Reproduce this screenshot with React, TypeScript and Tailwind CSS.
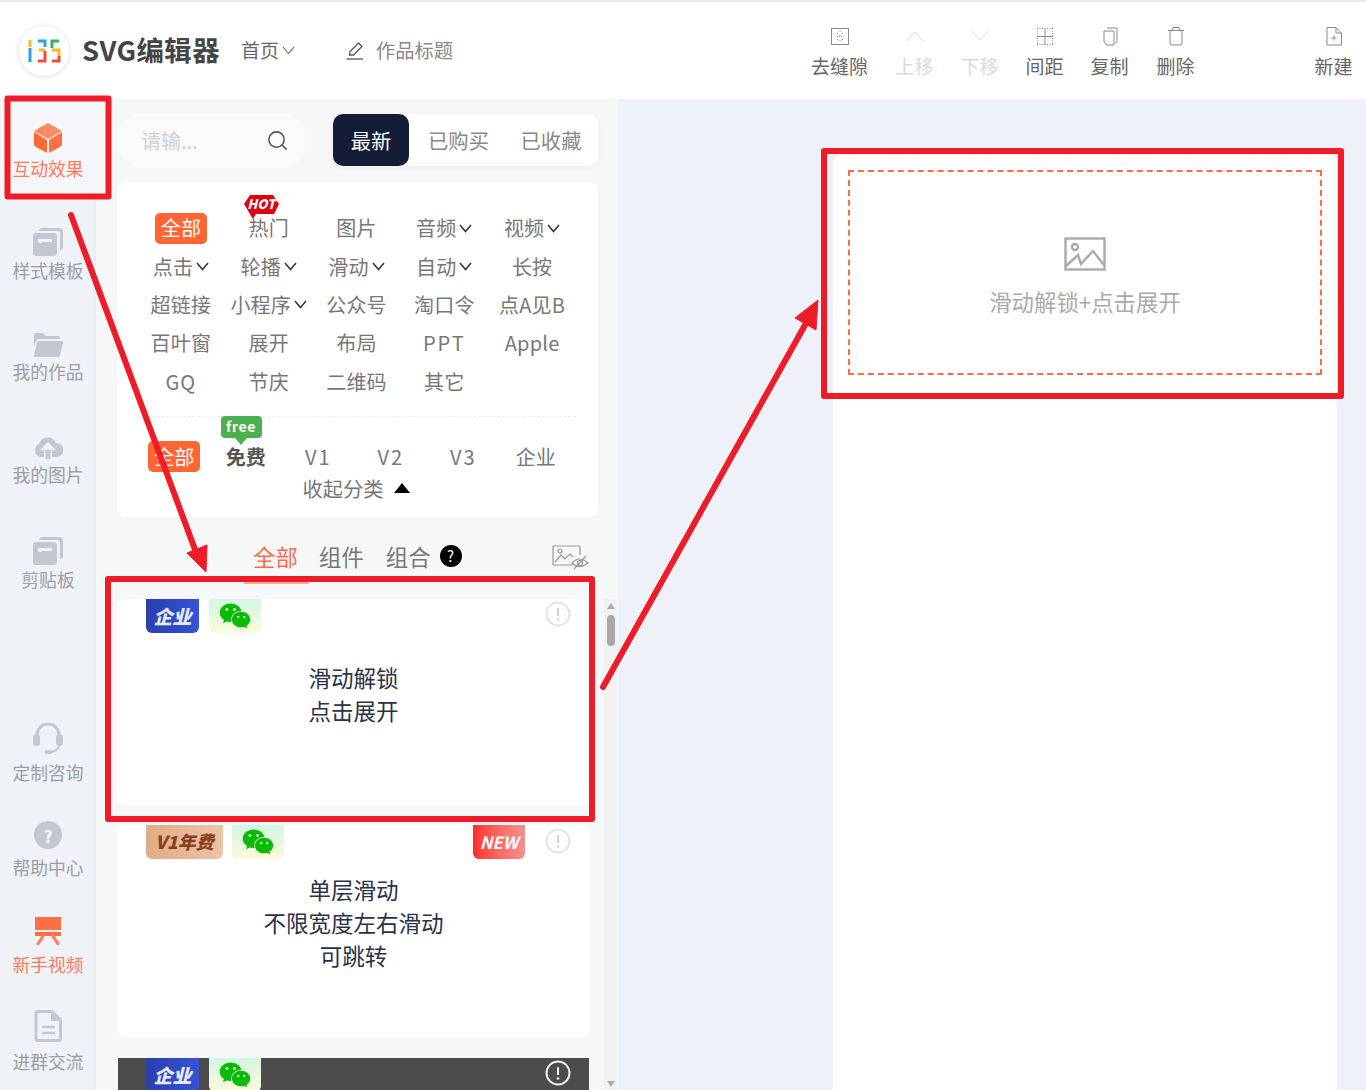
import { Search } from "lucide-react";
import { ReactNode } from "react";
import { FaWeixin } from "react-icons/fa";

const FONT = "font-['Noto_Sans_CJK_SC','Noto_Sans',sans-serif]";

const Chevron = ({ color = "#333", width = 1.5 }: { color?: string; width?: number }) => (
    <svg width="13" height="9" viewBox="0 0 13 9" fill="none" className="ml-[3px] shrink-0">
        <path d="M1 1 L6.5 7.5 L12 1" stroke={color} strokeWidth={width} />
    </svg>
);

const PenIcon = () => (
    <svg width="20" height="20" viewBox="0 0 20 20" fill="none" stroke="#555" strokeWidth="1.3">
        <path d="M4.5 14 L5 10.5 L13.5 2 L17 5.5 L8.5 14 Z" />
        <path d="M1.5 18 H18" />
    </svg>
);

const CubeIcon = () => (
    <svg width="30" height="32" viewBox="0 0 30 32">
        <path d="M15 1 L29 9 L15 17 L1 9 Z" fill="#ff8a65" />
        <path d="M1 10 L14 18 L14 31 L3 25 Q1 24 1 22 Z" fill="#ff6a33" />
        <path d="M29 10 L16 18 L16 31 L27 25 Q29 24 29 22 Z" fill="#ff7043" />
    </svg>
);

const TemplateIcon = () => (
    <svg width="30" height="28" viewBox="0 0 30 28">
        <path d="M6 3 Q6 0 9 0 L26 0 Q30 0 30 4 L30 19 Q30 22 27 22 L27 5 Q27 3 25 3 Z" fill="#c3c7d1" />
        <rect x="0" y="5" width="24" height="23" rx="3" fill="#c3c7d1" />
        <path d="M5 11 H19 V14 L9 14 A2 2 0 1 1 5 12 Z" fill="#f0f3f7" />
    </svg>
);

const FolderIcon = () => (
    <svg width="30" height="24" viewBox="0 0 30 24">
        <path d="M1 2 Q1 0 3 0 L10 0 L13 3 L25 3 Q27 3 27 5 L27 6 L6 6 Q4 6 3 8 L1 14 Z" fill="#c3c7d1" />
        <path d="M6 8 L29 8 Q30 8 30 10 L27 22 Q27 24 25 24 L2 24 Q1 24 1 22 L4 10 Q4 8 6 8 Z" fill="#c3c7d1" />
    </svg>
);

const CloudIcon = () => (
    <svg width="30" height="24" viewBox="0 0 30 24">
        <path d="M7 22 A7 7 0 0 1 6 9 A9 9 0 0 1 23 8 A7 7 0 0 1 24 22 L19 22 L19 15 L23 15 L15 7 L7 15 L11 15 L11 22 Z" fill="#c3c7d1" />
        <rect x="12.5" y="15" width="5" height="9" fill="#c3c7d1" />
    </svg>
);

const HeadsetIcon = () => (
    <svg width="30" height="32" viewBox="0 0 30 32">
        <path d="M4 15 V13 A11 11 0 0 1 26 13 V15" fill="none" stroke="#c3c7d1" strokeWidth="3" />
        <rect x="0" y="12" width="7" height="12" rx="3.5" fill="#c3c7d1" />
        <rect x="23" y="12" width="7" height="12" rx="3.5" fill="#c3c7d1" />
        <path d="M26 24 Q25 29 17 30" fill="none" stroke="#c3c7d1" strokeWidth="2" />
        <ellipse cx="15.5" cy="30" rx="4" ry="2" fill="#c3c7d1" />
    </svg>
);

const HelpIcon = () => (
    <div className="w-7 h-7 rounded-full bg-[#c3c7d1] flex items-center justify-center text-white font-bold text-[17px] leading-none">?</div>
);

const VideoIcon = () => (
    <svg width="26" height="28" viewBox="0 0 26 28">
        <rect x="0" y="0" width="26" height="13" fill="#ff6f47" />
        <rect x="0" y="15" width="26" height="4" fill="#ff6f47" />
        <path d="M8 19 L3 27 M18 19 L23 27" stroke="#ff7b57" strokeWidth="3" strokeLinecap="round" />
    </svg>
);

const DocIcon = () => (
    <svg width="28" height="32" viewBox="0 0 28 32">
        <path d="M2 3 Q2 1.5 4 1.5 L18 1.5 L26.5 10 L26.5 29 Q26.5 30.5 25 30.5 L4 30.5 Q2 30.5 2 29 Z" fill="none" stroke="#c3c7d1" strokeWidth="3" />
        <path d="M17 2 V11 H26 Z" fill="#c3c7d1" />
        <path d="M8 17 H21 M8 23 H21" stroke="#c3c7d1" strokeWidth="2.5" />
    </svg>
);

const LogoMark = () => (
    <svg width="34" height="26" viewBox="0 0 34 26" fill="none" strokeWidth="3">
        <path d="M3 2 V9" stroke="#f5b81f" />
        <path d="M3 10 V24" stroke="#2f9fe8" />
        <path d="M11 3 H18 V9" stroke="#2f9fe8" />
        <path d="M12 12 H18" stroke="#f5b81f" />
        <path d="M18 13 V23 H11" stroke="#ef4b3a" />
        <path d="M32 3 H25 V10" stroke="#35b558" />
        <path d="M25 12 H32 V18" stroke="#f5b81f" />
        <path d="M32 18 V23 H25" stroke="#ef4b3a" />
    </svg>
);

const ImageEyeIcon = () => (
    <svg width="37" height="26" viewBox="0 0 37 26" fill="none" stroke="#999" strokeWidth="1.2">
        <path d="M21 20 H2 Q1 20 1 19 V2 Q1 1 2 1 H27 Q28 1 28 2 V10" />
        <circle cx="8" cy="6" r="2" />
        <path d="M3 17 L9 10 L13 14 L18 9 L21 12" />
        <path d="M20 18 Q27 10 36 18 Q27 25 20 18 Z" />
        <circle cx="28" cy="18" r="2.5" />
        <path d="M34 11 L22 24" />
    </svg>
);

const ToolIcon = ({ type, color }: { type: string; color: string }) => (
    <svg width="22" height="22" viewBox="0 0 22 22" fill="none" stroke={color} strokeWidth="1">
        {type === "gap" && (
            <>
                <rect x="2.5" y="3.5" width="17" height="16" />
                <path d="M8 8.5 H9 M13 8.5 H14 M11 6 V7 M8 11.5 H14 M11 10 V11 M8 14.5 H9 M13 14.5 H14 M11 15 V17" strokeDasharray="1 1" />
            </>
        )}
        {type === "up" && <path d="M3 16 L11 7 L19 16" />}
        {type === "down" && <path d="M3 6 L11 15 L19 6" />}
        {type === "space" && (
            <>
                <path d="M3 3.5 H19 M3 19.5 H19 M3.5 3 V20 M18.5 3 V20" strokeDasharray="1 1.5" />
                <path d="M3 11.5 H19 M11 4 V20" />
            </>
        )}
        {type === "copy" && (
            <>
                <path d="M8 3 H18 V17 Q18 18 16 18" />
                <path d="M5 6 H15 V20 H8 L5 17 Z" />
            </>
        )}
        {type === "trash" && <path d="M3 5.5 H19 M5 6 V18 Q5 20 7 20 H15 Q17 20 17 18 V6 M7 5 L8 2.5 H14 L15 5" />}
        {type === "new" && <path d="M4 2.5 H13 L18.5 8 V20 H4 Z M13 2.5 V8 H18.5 M8.5 13 H13.5 M11 10.5 V15.5" />}
    </svg>
);

const tools = [
    { label: "去缝隙", type: "gap", off: false, cls: "" },
    { label: "上移", type: "up", off: true, cls: "ml-[10px]" },
    { label: "下移", type: "down", off: true, cls: "" },
    { label: "间距", type: "space", off: false, cls: "" },
    { label: "复制", type: "copy", off: false, cls: "" },
    { label: "删除", type: "trash", off: false, cls: "ml-[1px]" },
    { label: "新建", type: "new", off: false, cls: "ml-[93px]" },
];

const sideItems = [
    { label: "样式模板", icon: <TemplateIcon />, cls: "mt-[27px]", gap: "mt-[0px]", active: false },
    { label: "我的作品", icon: <FolderIcon />, cls: "mt-[47px]", gap: "mt-[-2px]", active: false },
    { label: "我的图片", icon: <CloudIcon />, cls: "mt-[48px]", gap: "mt-[-1px]", active: false },
    { label: "剪贴板", icon: <TemplateIcon />, cls: "mt-[49px]", gap: "mt-[0px]", active: false },
    { label: "定制咨询", icon: <HeadsetIcon />, cls: "mt-[131px]", gap: "mt-[6px]", active: false },
    { label: "帮助中心", icon: <HelpIcon />, cls: "mt-[35px]", gap: "mt-[4px]", active: false },
    { label: "新手视频", icon: <VideoIcon />, cls: "mt-[36px]", gap: "mt-[5px]", active: true },
    { label: "进群交流", icon: <DocIcon />, cls: "mt-[34px]", gap: "mt-[7px]", active: false },
];

const categories: [string, boolean][] = [
    ["全部", false], ["热门", false], ["图片", false], ["音频", true], ["视频", true],
    ["点击", true], ["轮播", true], ["滑动", true], ["自动", true], ["长按", false],
    ["超链接", false], ["小程序", true], ["公众号", false], ["淘口令", false], ["点A见B", false],
    ["百叶窗", false], ["展开", false], ["布局", false], ["PPT", false], ["Apple", false],
    ["GQ", false], ["节庆", false], ["二维码", false], ["其它", false],
];

const levels = ["全部", "免费", "V1", "V2", "V3", "企业"];

const SideItem = ({ label, icon, cls, gap, active }: { label: string; icon: ReactNode; cls: string; gap: string; active: boolean }) => (
    <div className={`flex flex-col items-center ${cls}`}>
        <div className="h-[32px] flex items-center justify-center">{icon}</div>
        <div className={`text-[17.8px] leading-[24px] whitespace-nowrap ${gap} ${active ? "text-[#ff7a5c]" : "text-[#9a9ea6]"}`}>{label}</div>
    </div>
);

const CompanyBadge = () => (
    <div className="w-[53px] h-[34px] rounded-b-[6px] bg-gradient-to-r from-[#2b3fae] to-[#3553d6] flex items-center justify-center text-[#e6eaff] italic font-black text-[19px] leading-none pb-[2px]">企业</div>
);

const WechatBadge = () => (
    <div className="w-[52px] h-[34px] rounded-b-[6px] bg-gradient-to-b from-[#d2f8e2] to-[#fbfbda] flex items-center justify-center">
        <FaWeixin className="text-[#09bb07] text-[32px]" />
    </div>
);

const InfoIcon = ({ color = "#dfe4ee", mark = "#ccd2de" }: { color?: string; mark?: string }) => (
    <svg width="26" height="26" viewBox="0 0 26 26" fill="none">
        <circle cx="13" cy="13" r="11.5" stroke={color} strokeWidth="2" />
        <path d="M13 7 V15" stroke={mark} strokeWidth="2" />
        <circle cx="13" cy="18.5" r="1.3" fill={mark} />
    </svg>
);

export default function App() {
    return (
        <div className={`${FONT} relative w-[1366px] h-[1090px] overflow-hidden bg-white`}>
            <div className="h-[2px] bg-[#e8e8e8]" />
            <header className="h-[97px] flex items-center bg-white">
                <div className="ml-[19px] w-[50px] h-[50px] rounded-full bg-white shadow-[0_1px_6px_rgba(0,0,0,0.14)] flex items-center justify-center">
                    <LogoMark />
                </div>
                <div className="ml-[13px] mt-[-2px] text-[27.4px] font-bold text-[#444] tracking-[0.4px] whitespace-nowrap">SVG编辑器</div>
                <div className="ml-[21px] flex items-center text-[#666] text-[19px]">
                    首页
                    <Chevron color="#666" width={1.1} />
                </div>
                <div className="ml-[50px]"><PenIcon /></div>
                <div className="ml-[11px] text-[19.3px] text-[#888]">作品标题</div>
                <div className="ml-auto mt-[2px] flex">
                    {tools.map((tool) => (
                        <div key={tool.label} className={`w-[65px] flex flex-col items-center ${tool.cls}`}>
                            <ToolIcon type={tool.type} color={tool.off ? "#d5dce5" : "#8a8a8a"} />
                            <div className={`mt-[6px] text-[19px] leading-[26px] whitespace-nowrap ${tool.off ? "text-[#d5dce5]" : "text-[#666]"}`}>{tool.label}</div>
                        </div>
                    ))}
                </div>
            </header>

            <div className="flex h-[991px]">
                <aside className="w-[96px] bg-[#eff2f6] shadow-[inset_-6px_0_6px_-6px_rgba(0,0,0,0.05)] shrink-0 overflow-hidden">
                    <div className="h-[100px] bg-[#f4f6f9] pt-[23px]">
                        <SideItem label="互动效果" icon={<CubeIcon />} cls="" gap="mt-[2px]" active />
                    </div>
                    {sideItems.map((item) => <SideItem key={item.label} {...item} />)}
                </aside>

                <section className="w-[522px] shrink-0 bg-[#f6f7f9] pl-[21px] pt-[14px]">
                    <div className="flex items-start w-[481px] h-[55px]">
                        <div className="w-[191px] h-[55px] rounded-full bg-[#fafafa] flex items-center pl-[24px] pr-[19px] justify-between">
                            <span className="text-[20px] text-[#ccd0d8]">请输...</span>
                            <Search size={23} strokeWidth={1.6} className="text-[#555]" />
                        </div>
                        <div className="ml-[25px] mt-[1px] w-[265px] h-[52px] rounded-[10px] bg-white shadow-[0_2px_6px_rgba(0,0,0,0.04)] flex items-center text-[20.3px] text-[#888]">
                            <div className="w-[76px] h-[52px] rounded-[10px] bg-[#141c36] text-white flex items-center justify-center">最新</div>
                            <div className="w-[99px] text-center">已购买</div>
                            <div className="w-[86px] text-center">已收藏</div>
                        </div>
                    </div>

                    <div className="mt-[14px] w-[481px] h-[335px] rounded-[8px] bg-white shadow-[0_1px_4px_rgba(0,0,0,0.03)] pl-[20px] pr-[22px] pt-[27px]">
                        <div className="grid grid-cols-5">
                            {categories.map(([name, arrow], idx) => (
                                <div key={name} className={`relative h-[38.4px] flex items-center justify-center text-[20px] whitespace-nowrap ${idx === 0 ? "text-white" : "text-[#777]"} ${name === "PPT" ? "tracking-[2px]" : name === "GQ" ? "tracking-[1px]" : "tracking-[0.2px]"}`}>
                                    {idx === 0 ? (
                                        <span className="w-[52px] h-[31px] rounded-[5px] bg-[#ff6633] flex items-center justify-center">{name}</span>
                                    ) : name}
                                    {arrow && <Chevron />}
                                    {name === "热门" && (
                                        <div className="absolute left-[18px] top-[-15px] w-[37px] h-[25px]">
                                            <svg width="37" height="25" viewBox="0 0 37 25">
                                                <path d="M7 1 H30 L36 10 L31 20 H13 L10 25 L7 20 L1 10 Z" fill="#e0000f" />
                                            </svg>
                                            <span className="absolute left-[4px] top-[2px] w-[29px] text-center italic font-black text-[13px] leading-[16px] text-white tracking-normal">HOT</span>
                                        </div>
                                    )}
                                </div>
                            ))}
                        </div>

                        <div className="mt-[15px] border-t border-dashed border-[#eeeeee]" />

                        <div className="flex mt-[21px]">
                            {levels.map((name, idx) => (
                                <div key={name} className={`relative w-[72.5px] h-[38px] flex items-center justify-center text-[20px] ${idx === 1 ? "font-bold text-[#555]" : "text-[#777]"} ${name.startsWith("V") ? "tracking-[2px]" : ""}`}>
                                    {idx === 0 ? (
                                        <span className="ml-[2px] w-[52px] h-[31px] rounded-[5px] bg-[#ff6633] text-white flex items-center justify-center">{name}</span>
                                    ) : name}
                                    {idx === 1 && (
                                        <div className="absolute left-[11px] top-[-22px] w-[41px] h-[22px] rounded-[4px] bg-[#4caf50] text-white text-[14px] font-bold leading-[20px] text-center tracking-[0.6px]">
                                            free
                                            <div className="absolute left-[14px] top-[22px] w-0 h-0 border-x-[6px] border-x-transparent border-t-[7px] border-t-[#4caf50]" />
                                        </div>
                                    )}
                                </div>
                            ))}
                        </div>
                        <div className="flex items-center justify-center h-[24px] text-[20.3px] text-[#777] pr-[1px]">
                            收起分类
                            <span className="ml-[10px] w-0 h-0 border-x-[8px] border-x-transparent border-b-[10px] border-b-black" />
                        </div>
                    </div>

                    <div className="mt-[25px] h-[42px] flex items-start text-[22.4px] text-[#777]">
                        <div className="ml-[127px] w-[65px] h-[42px] pr-[2px] text-center text-[#ff6b4a] border-b-2 border-[#ffa79a] leading-[28px]">全部</div>
                        <div className="ml-[10px] leading-[28px]">组件</div>
                        <div className="ml-[22px] leading-[28px]">组合</div>
                        <div className="ml-[9px] mt-[3px] w-[22px] h-[22px] rounded-full bg-black text-white text-[15px] leading-[22px] text-center">?</div>
                        <div className="ml-[90px] mt-[3px]"><ImageEyeIcon /></div>
                    </div>

                    <div className="flex mt-[15px]">
                        <div className="w-[473px] shrink-0">
                            <div className="h-[206px] rounded-[8px] bg-white">
                                <div className="flex pl-[29px] pr-[19px] gap-[10px]">
                                    <CompanyBadge />
                                    <WechatBadge />
                                    <div className="ml-auto mt-[2px]"><InfoIcon /></div>
                                </div>
                                <div className="mt-[28px] text-center text-[22.5px] leading-[33px] text-[#2a3148]">
                                    滑动解锁<br />点击展开
                                </div>
                            </div>

                            <div className="mt-[20px] h-[212px] rounded-[8px] bg-white">
                                <div className="flex pl-[29px] pr-[19px] gap-[9px]">
                                    <div className="w-[77px] h-[34px] rounded-b-[6px] bg-gradient-to-r from-[#e0ab88] to-[#ecc4a6] flex items-center justify-center text-[#8c3f1c] italic font-black text-[18px] leading-none whitespace-nowrap pb-[2px]">V1年费</div>
                                    <WechatBadge />
                                    <div className="ml-auto w-[52px] h-[34px] rounded-b-[6px] bg-gradient-to-r from-[#ff2b2b] to-[#f29090] flex items-center justify-center text-white italic font-bold text-[17px] leading-none pb-[2px]">NEW</div>
                                    <div className="ml-[11px] mt-[3px]"><InfoIcon /></div>
                                </div>
                                <div className="mt-[14px] text-center text-[22.5px] leading-[33px] text-[#2a3148]">
                                    单层滑动<br />不限宽度左右滑动<br />可跳转
                                </div>
                            </div>

                            <div className="mt-[21px] ml-[1px] w-[471px] h-[60px] bg-[#4c4c4c] flex pl-[28px] pr-[18px] gap-[10px]">
                                <CompanyBadge />
                                <WechatBadge />
                                <div className="ml-auto mt-[2px]"><InfoIcon color="#f2f2f2" mark="#f2f2f2" /></div>
                            </div>
                        </div>
                        <div className="ml-[14px] w-[13px] h-[491px] bg-[#f1f1f1] flex flex-col items-center justify-between pt-[4px] pb-[3px]">
                            <div className="flex flex-col items-center">
                                <span className="w-0 h-0 border-x-[4px] border-x-transparent border-b-[6px] border-b-[#aaaaaa]" />
                                <span className="mt-[6px] w-[8px] h-[31px] rounded-full bg-[#a9a9a9]" />
                            </div>
                            <span className="w-0 h-0 border-x-[4px] border-x-transparent border-t-[6px] border-t-[#aaaaaa]" />
                        </div>
                    </div>
                </section>

                <main className="flex-1 bg-[#eef1f8] pl-[215px] pt-[56px]">
                    <div className="w-[504px] h-[960px] rounded-t-[8px] bg-white p-[15px]">
                        <div className="h-[205px] border-2 border-dashed border-[#ff6b45] flex flex-col items-center pt-[65px]">
                            <svg width="42" height="34" viewBox="0 0 42 34" fill="none" stroke="#aaaaaa" strokeWidth="2.4">
                                <rect x="1.5" y="1.5" width="39" height="31" />
                                <circle cx="11" cy="10" r="3" />
                                <path d="M2 29 L14 18 L17 27 L29 14 L40 28" />
                            </svg>
                            <div className="mt-[14px] text-[22.4px] leading-[32px] text-[#aaaaaa]">滑动解锁+点击展开</div>
                        </div>
                    </div>
                </main>
            </div>

            <svg className="absolute left-0 top-0 pointer-events-none" width="1366" height="1090" viewBox="0 0 1366 1090" fill="none" stroke="#ee1c27" strokeWidth="6" strokeLinejoin="round">
                <rect x="7.5" y="98.5" width="101" height="98" />
                <rect x="108" y="579" width="484" height="240" />
                <rect x="824" y="151" width="517" height="245" />
                <path d="M71 215 L197 555" strokeLinecap="round" />
                <path d="M206 572 L187 553 L207 545 Z" fill="#ee1c27" strokeWidth="1" />
                <path d="M603 687 L805 325" strokeLinecap="round" />
                <path d="M818 300 L795 318 L816 330 Z" fill="#ee1c27" strokeWidth="1" />
            </svg>
        </div>
    );
}
